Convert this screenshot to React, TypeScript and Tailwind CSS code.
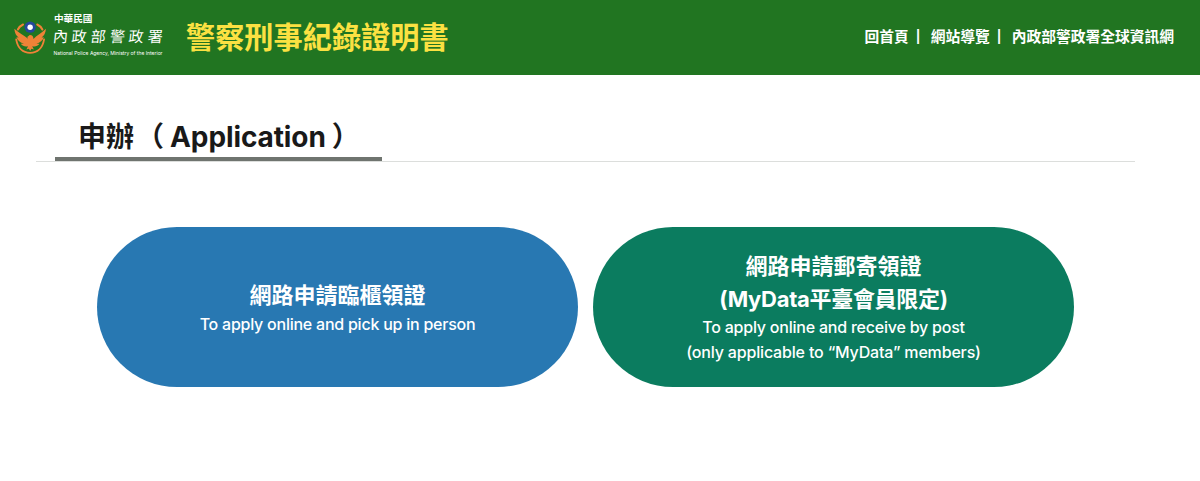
const FONT = "font-['Inter','Noto_Sans_CJK_TC',sans-serif]";

function PoliceLogo() {
  return (
    <svg width="150" height="50" viewBox="0 0 150 50" className="block shrink-0 overflow-visible" role="img">
      <g transform="translate(-0.5 -0.6) scale(1.04)">
        <g fill="none" stroke="#ef8237" strokeLinecap="round">
          <path d="M2.6 27C4 35 9 39.8 16 39.8C23 39.8 28 35 29.4 27" strokeWidth="1.7" />
          <path d="M9.2 12.6C7 13.6 5.2 15.2 4.2 17.4M22.8 12.6C25 13.6 26.8 15.2 27.8 17.4" strokeWidth="1.9" />
        </g>
        <path
          d="M0.8 16.6C1.2 21 2.6 23.4 5 25L2.8 24.8C4 28 6.4 30 10 30.8L7 31.2C8.8 33.4 11.4 34.2 14 33.4L12.4 36.6L14.8 36L16 38L17.2 36L19.6 36.6L18 33.4C20.6 34.2 23.2 33.4 25 31.2L22 30.8C25.6 30 28 28 29.2 24.8L27 25C29.4 23.4 30.8 21 31.2 16.6C27.5 20.6 22.5 22.6 19.2 26.6C19.2 24.2 17.8 22.6 15.6 22.8L13.2 24.6L14 26.4C10 22.6 5 20.6 0.8 16.6Z"
          fill="#ef8237"
        />
        <circle cx="16" cy="15.2" r="5.4" fill="#24479d" />
        <circle cx="16" cy="15.2" r="2.6" fill="#fff" />
      </g>
      <g fill="#fff" fontFamily="'Inter','Noto Sans CJK TC',sans-serif">
        <text x="40" y="9.8" fontSize="9.4" fontWeight="600" textLength="38.5" lengthAdjust="spacingAndGlyphs">中華民國</text>
        <g fontSize="15" fontWeight="400" transform="translate(0 29.6) skewX(-6)">
          <text x="38.5">內</text>
          <text x="57">政</text>
          <text x="76.2">部</text>
          <text x="95.5">警</text>
          <text x="114">政</text>
          <text x="133.2">署</text>
        </g>
        <text x="39.5" y="43.2" fontSize="5.2" fontWeight="400" textLength="109" lengthAdjust="spacingAndGlyphs">
          National Police Agency, Ministry of the Interior
        </text>
      </g>
    </svg>
  );
}

export default function App() {
  return (
    <div className={`h-[481px] overflow-hidden bg-white ${FONT}`}>
      <header className="flex h-[75px] items-start justify-between bg-[#217521] pl-[14px] pr-[26px]">
        <div className="flex items-start">
          <div className="pt-3">
            <PoliceLogo />
          </div>
          <h1 className="ml-[22px] pt-[18px] text-[29.2px] leading-[40px] font-bold whitespace-nowrap text-[#fbe142]">
            警察刑事紀錄證明書
          </h1>
        </div>
        <nav className="flex items-center pt-[26px] text-[14.75px] leading-[22px] font-bold whitespace-nowrap text-white">
          <a>回首頁</a>
          <span className="w-[22px] pl-[7px] text-[12.5px]">|</span>
          <a>網站導覽</a>
          <span className="w-[22px] pl-[7px] text-[12.5px]">|</span>
          <a>內政部警政署全球資訊網</a>
        </nav>
      </header>

      <main>
        <div className="mt-[35px] ml-[36px] flex h-[52px] w-[1099px] border-b border-[#dcdedc] pl-[19px]">
          <h2 className="h-[51px] w-[327px] border-b-4 border-[#6f746f] pt-[7px] pl-[23px] text-[28px] leading-[40px] font-bold whitespace-nowrap text-[#191919]">
            申辦<span className="ml-[2px]">（</span>
            <span className="ml-[6px] tracking-[-0.1px]">Application</span>
            <span className="ml-[6px]">）</span>
          </h2>
        </div>

        <div className="mt-[65px] ml-[97px] flex gap-[15px] text-center whitespace-nowrap text-white">
          <a className="flex h-[160px] w-[481px] flex-col items-center justify-center rounded-[80px] bg-[#2878b2] pt-[2px]">
            <span className="text-[22px] leading-[33px] font-bold">網路申請臨櫃領證</span>
            <span className="text-[16px] leading-[25px] font-[450] tracking-[-0.24px]">To apply online and pick up in person</span>
          </a>
          <a className="flex h-[160px] w-[481px] flex-col items-center rounded-[80px] bg-[#0b7c5f] pt-[23px]">
            <span className="text-[22px] leading-[33px] font-bold">網路申請郵寄領證</span>
            <span className="text-[22px] leading-[33px] font-bold tracking-[-0.3px]">(MyData平臺會員限定)</span>
            <span className="-mt-px text-[16px] leading-[25px] font-[450] tracking-[-0.22px]">To apply online and receive by post</span>
            <span className="text-[16px] leading-[25px] font-[450] tracking-[-0.17px]">(only applicable to “MyData” members)</span>
          </a>
        </div>
      </main>
    </div>
  );
}
